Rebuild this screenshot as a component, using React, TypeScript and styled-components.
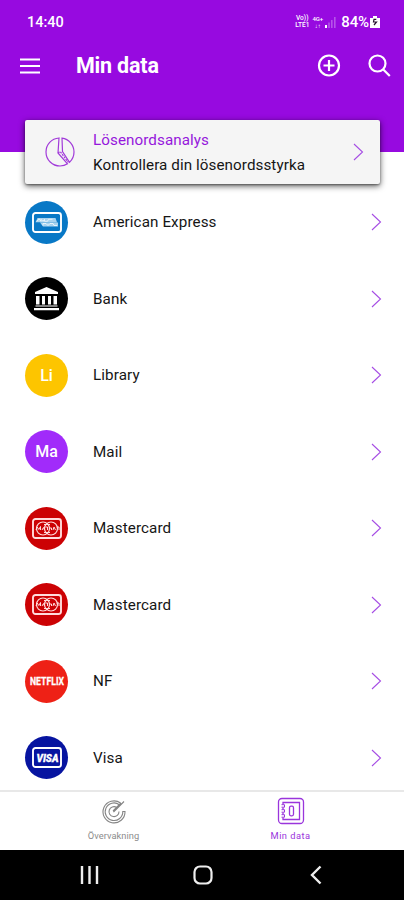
import React from "react";
import styled, { createGlobalStyle } from "styled-components";

const Global = createGlobalStyle`
  * { box-sizing: border-box; }
  body { margin: 0; background: #fff; font-family: Roboto, "Liberation Sans", sans-serif; }
  svg { display: block; flex: none; }
`;

const Screen = styled.div`
  width: 404px;
  height: 900px;
  display: flex;
  flex-direction: column;
  overflow: hidden;
  background: #fff;
`;

const Header = styled.header`
  flex: none;
  height: 152px;
  background: #970ae0;
  color: #fff;
`;

const StatusBar = styled.div`
  height: 44px;
  padding: 0 24px 0 27px;
  display: flex;
  align-items: center;
  font-size: 14.5px;
  font-weight: 500;
`;

const Clock = styled.span`
  flex: 1;
`;

const NetworkLabel = styled.span<{ $size: number; $gap: number }>`
  display: flex;
  flex-direction: column;
  align-items: center;
  margin-right: ${(p) => p.$gap}px;
  font-size: ${(p) => p.$size}px;
  line-height: 7px;
  font-weight: 500;
`;

const Battery = styled.span`
  margin: 0 1px 0 5px;
  font-size: 15px;
  letter-spacing: -0.1px;
`;

const AppBar = styled.div`
  height: 44px;
  padding: 0 13px 0 19px;
  display: flex;
  align-items: center;
`;

const Title = styled.h1`
  flex: 1;
  margin: 0 0 0 35px;
  font-size: 21.5px;
  line-height: 26px;
  font-weight: 700;
  letter-spacing: -0.2px;
`;

const Actions = styled.div`
  display: flex;
  align-items: center;
  gap: 26px;
`;

const Card = styled.section`
  flex: none;
  height: 64px;
  margin: -32px 24px 0 25px;
  padding: 0 16px 0 20px;
  display: flex;
  align-items: center;
  background: #f5f5f5;
  border-radius: 2px;
  box-shadow: 0 2px 6px rgba(0, 0, 0, 0.65), 0 1px 2px rgba(0, 0, 0, 0.35);
  z-index: 1;
`;

const CardText = styled.div`
  flex: 1;
  margin-left: 18px;
  padding-top: 2px;
  font-size: 15.2px;
  line-height: 25px;
  letter-spacing: 0.08px;
  color: #161616;
`;

const CardTitle = styled.div`
  color: #9518dc;
`;

const List = styled.main`
  flex: 1;
  min-height: 0;
`;

const Row = styled.div`
  height: 76.5px;
  padding: 0 22px 0 25px;
  display: flex;
  align-items: center;
`;

const Avatar = styled.div<{ $color: string }>`
  width: 43px;
  height: 43px;
  border-radius: 50%;
  background: ${(p) => p.$color};
  display: flex;
  align-items: center;
  justify-content: center;
  color: #fff;
  font-size: 16px;
  font-weight: 500;
`;

const Name = styled.span`
  flex: 1;
  margin-left: 25px;
  font-size: 15.2px;
  letter-spacing: 0.1px;
  color: #161616;
`;

const Tabs = styled.nav`
  flex: none;
  height: 60px;
  border-top: 2px solid #e8e8e8;
  padding: 0 25px;
  display: grid;
  grid-template-columns: 1fr 1fr;
  background: #fff;
`;

const Tab = styled.div<{ $active?: boolean }>`
  display: flex;
  flex-direction: column;
  align-items: center;
  padding-top: 5px;
  gap: 5px;
  color: ${(p) => (p.$active ? "#9a35dc" : "#8c8c8c")};
  font-size: 9.3px;
  line-height: 12px;
  letter-spacing: ${(p) => (p.$active ? "0.45px" : "0.05px")};
`;

const SystemBar = styled.footer`
  flex: none;
  height: 50px;
  padding: 0 31px 0 33px;
  display: grid;
  grid-template-columns: repeat(3, 1fr);
  place-items: center;
  background: #000;
`;

const Chevron = () => (
  <svg width="11" height="18" viewBox="0 0 11 18" fill="none" stroke="#a64de4" strokeWidth="1.1">
    <path d="M1 1l8.5 8L1 17" />
  </svg>
);

const CardFrame = () => <rect x="1" y="1" width="28" height="19" rx="2.5" strokeWidth="1.9" />;

const AmexIcon = () => (
  <svg width="30" height="21" viewBox="0 0 30 21" fill="none" stroke="#fff">
    <CardFrame />
    <path d="M5.5 6h18l1.500 4.200H3.500zM8 10.600h18v3.800H11z" fill="#a9d3ef" stroke="none" />
    <path d="M5 9.300l2-2.500 2 2.500v-2l2 2 1.500-2v2h3l1-2h4M11 13.500v-2h3l2 2 2-2h3l1 2h3" strokeWidth=".7" />
  </svg>
);

const BankIcon = () => (
  <svg width="25" height="24" viewBox="0 0 25 24" fill="#fff">
    <path d="M12.500 0L24 5v2H1V5zM2 9h3.500v8.500H2zM8 9h3v8.500H8zM14 9h3v8.500h-3zM19.500 9H23v8.500h-3.500zM1.500 18.500h22v1h-22zM0 21h25v2.300H0z" />
  </svg>
);

const MastercardIcon = () => (
  <svg width="30" height="21" viewBox="0 0 30 21" fill="none" stroke="#ffdcdc">
    <CardFrame />
    <circle cx="11" cy="10.500" r="6.500" strokeWidth="1.200" />
    <circle cx="19" cy="10.500" r="6.500" strokeWidth="1.200" />
    <path d="M4 12l1.200-3 1.600 2.500L8.500 8.500V12m1.500 0l1.500-2.500 1 2.500m1-3h2v3m2-2h2v2m1.500 0l1-3 1.500 3m1-3h2.500v3M12 6.500h6m-6 8h6" strokeWidth="1" />
  </svg>
);

const NetflixIcon = () => (
  <svg width="38" height="18" viewBox="0 0 38 18">
    <text x="2" y="13.200" textLength="34" lengthAdjust="spacingAndGlyphs" fill="#fff" stroke="#fff" strokeWidth=".3" fontFamily="Roboto, sans-serif" fontWeight="700" fontSize="11.500">NETFLIX</text>
  </svg>
);

const VisaIcon = () => (
  <svg width="30" height="21" viewBox="0 0 30 21" fill="none" stroke="#fff">
    <CardFrame />
    <text x="4.500" y="14.500" textLength="22" lengthAdjust="spacingAndGlyphs" fill="#fff" stroke="#fff" strokeWidth=".3" fontFamily="Roboto, sans-serif" fontWeight="900" fontStyle="italic" fontSize="11">VISA</text>
  </svg>
);

const entries: { name: string; color: string; mark: React.ReactNode }[] = [
  { name: "American Express", color: "#0878c6", mark: <AmexIcon /> },
  { name: "Bank", color: "#000", mark: <BankIcon /> },
  { name: "Library", color: "#fdc500", mark: "Li" },
  { name: "Mail", color: "#a12bfa", mark: "Ma" },
  { name: "Mastercard", color: "#cc0204", mark: <MastercardIcon /> },
  { name: "Mastercard", color: "#cc0204", mark: <MastercardIcon /> },
  { name: "NF", color: "#ee2116", mark: <NetflixIcon /> },
  { name: "Visa", color: "#0714a0", mark: <VisaIcon /> },
];

export default function App() {
  return (
    <Screen>
      <Global />
      <Header>
        <StatusBar>
          <Clock>14:40</Clock>
          <NetworkLabel $size={6.6} $gap={3}><span>Vo))</span><span>LTE1</span></NetworkLabel>
          <NetworkLabel $size={6} $gap={2}><span>4G+</span><span>↓↑</span></NetworkLabel>
          <svg width="11" height="11" viewBox="0 0 11 11" fill="#fff">
            <path d="M0 8h2v3H0z" />
            <path d="M3.2 5.5h1.6V11H3.2zM6 3h1.6v8H6zM9 0h1.6v11H9z" opacity=".3" />
          </svg>
          <Battery>84%</Battery>
          <svg width="10" height="12" viewBox="0 0 10 12">
            <path d="M3 0h4v2h3v10H0V2h3z" fill="#fff" />
            <path d="M6.300 3.300H4L3.500 6h3L4 9" stroke="#29142f" fill="none" strokeWidth="1.200" />
          </svg>
        </StatusBar>
        <AppBar>
          <svg width="22" height="16" viewBox="0 0 22 16" stroke="#fff" strokeWidth="2">
            <path d="M1 1.500h20M1 8h20M1 14.500h20" />
          </svg>
          <Title>Min data</Title>
          <Actions>
            <svg width="24" height="24" viewBox="0 0 24 24" fill="none" stroke="#fff" strokeWidth="2.200">
              <circle cx="12" cy="11.500" r="10" />
              <path d="M12 6v11M6.500 11.500h11" />
            </svg>
            <svg width="24" height="24" viewBox="0 0 24 24" fill="none" stroke="#fff" strokeWidth="2.200">
              <circle cx="10.500" cy="9.500" r="8" />
              <path d="M16.300 15.500l6.500 6.500" />
            </svg>
          </Actions>
        </AppBar>
      </Header>
      <Card>
        <svg width="30" height="30" viewBox="0 0 30 30" fill="none" stroke="#a13ad9" strokeWidth="1.200">
          <path d="M14 1C6.500 1.500 1 7.500 1 15c0 8 6.500 14 14 14 3 0 5.500-.8 7.500-2.200L13 16z" />
          <path d="M17 1.200C24 2 29 8 29 15c0 4-1.500 7.500-4.500 10.300L17.500 14.500z" />
          <path d="M13 16l2.200-1.500 8 11" strokeDasharray="2 1" />
        </svg>
        <CardText>
          <CardTitle>Lösenordsanalys</CardTitle>
          <div>Kontrollera din lösenordsstyrka</div>
        </CardText>
        <Chevron />
      </Card>
      <List>
        {entries.map((entry, index) => (
          <Row key={index}>
            <Avatar $color={entry.color}>{entry.mark}</Avatar>
            <Name>{entry.name}</Name>
            <Chevron />
          </Row>
        ))}
      </List>
      <Tabs>
        <Tab>
          <svg width="28" height="28" viewBox="0 0 28 28" fill="none" stroke="#858585" strokeWidth="1.100">
            <path d="M20.500 6A11 11 0 1 0 25 14.500h-2.200a8.800 8.800 0 1 1-3.500-6.800" />
            <path d="M16.500 10.300a5 5 0 1 0 2.500 4.200M13.500 15.200L24 4.500M13 14l8-8" />
          </svg>
          Övervakning
        </Tab>
        <Tab $active>
          <svg width="28" height="28" viewBox="0 0 28 28" fill="none" stroke="#9a35dc" strokeWidth="1.300">
            <rect x="1.500" y="1.500" width="25" height="25" rx="3.500" />
            <path d="M6 7.500V5.500h16.500v17H6v-2M6 10.500v2M6 15.500v2" />
            <path d="M4.500 7.700h3v2.500h-3M4.500 12.700h3v2.500h-3M4.500 17.700h3v2.500h-3" strokeWidth="1" />
            <rect x="12.500" y="9.200" width="4" height="9.600" rx="1.500" />
          </svg>
          Min data
        </Tab>
      </Tabs>
      <SystemBar>
        <svg width="19" height="20" viewBox="0 0 19 20" stroke="#eee" strokeWidth="2.400">
          <path d="M2 1v18M9.500 1v18M17 1v18" />
        </svg>
        <svg width="20" height="20" viewBox="0 0 20 20" fill="none" stroke="#eee" strokeWidth="2.200">
          <rect x="1.500" y="1.500" width="17" height="17" rx="5.500" />
        </svg>
        <svg width="12" height="20" viewBox="0 0 12 20" fill="none" stroke="#eee" strokeWidth="2.400">
          <path d="M10.500 1.500L2 10l8.500 8.500" />
        </svg>
      </SystemBar>
    </Screen>
  );
}
